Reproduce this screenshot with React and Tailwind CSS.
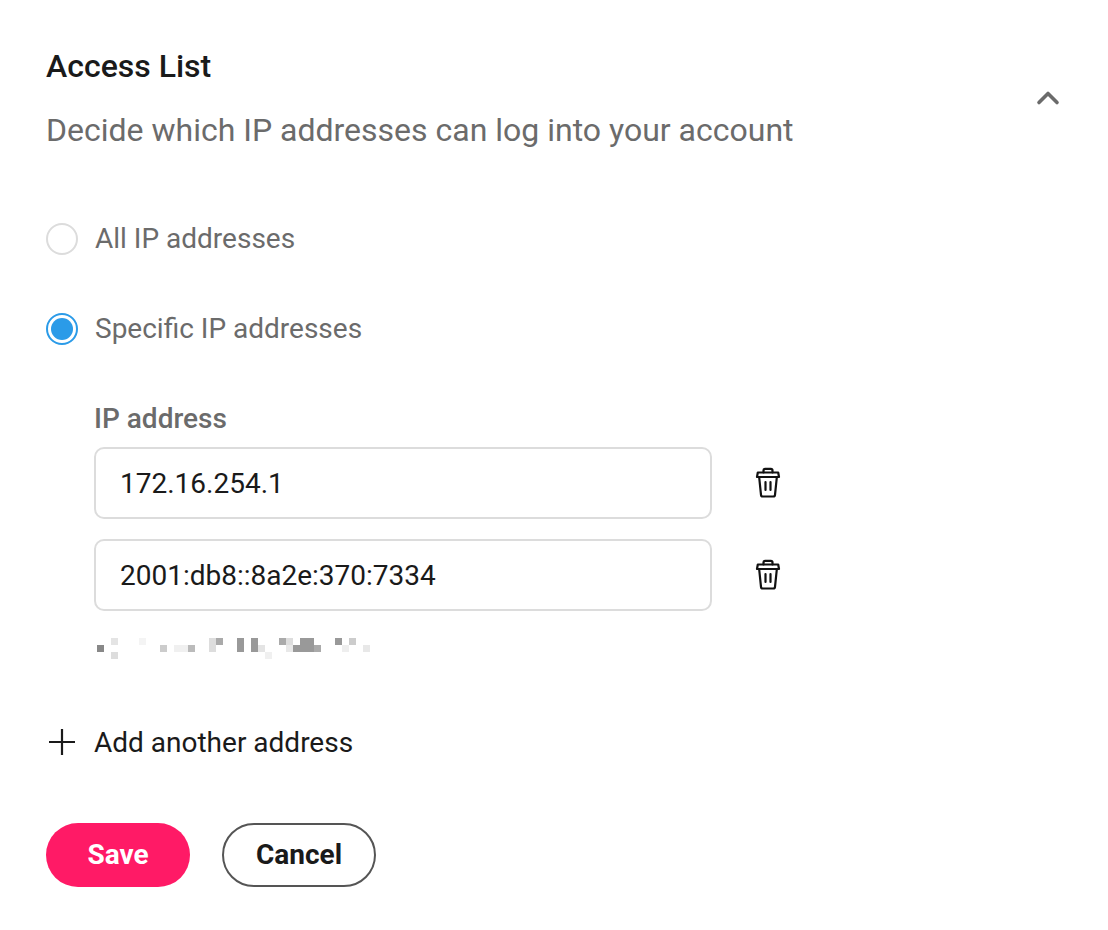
import { ChevronUp } from "lucide-react";

const font = { fontFamily: "Roboto, sans-serif" };

// pixelated redacted line under the inputs: [x, y, w, fill]
const blurCells = [
  [14, 0, 7, "#e4e4e4"], [42, 0, 7, "#f4f4f4"], [112, 0, 7, "#dddddd"], [119, 0, 7, "#aaaaaa"],
  [140, 0, 7, "#999999"], [154, 0, 7, "#999999"], [182, 0, 7, "#aaaaaa"], [189, 0, 7, "#dddddd"],
  [203, 0, 14, "#999999"], [238, 0, 7, "#999999"], [252, 0, 7, "#cccccc"],
  [0, 7, 7, "#888888"], [63, 7, 7, "#cccccc"], [77, 7, 14, "#f0f0f0"], [91, 7, 7, "#bbbbbb"],
  [112, 7, 7, "#dddddd"], [140, 7, 7, "#999999"], [154, 7, 7, "#999999"], [161, 7, 7, "#e4e4e4"],
  [189, 7, 7, "#e8e8e8"], [196, 7, 21, "#999999"], [217, 7, 7, "#aaaaaa"], [245, 7, 7, "#eeeeee"],
  [266, 7, 7, "#e8e8e8"], [14, 14, 7, "#dddddd"], [168, 14, 7, "#f0f0f0"],
];

function Trash() {
  return (
    <svg width="26" height="32" viewBox="0 0 26 32" fill="none" stroke="#111111" strokeWidth="2.2" strokeLinecap="round" strokeLinejoin="round">
      <path d="M2 10h22l-.8-4.500H2.800z" />
      <path d="M8.500 5.500V3.500C8.500 2.400 9.300 1.800 10.200 1.800h5.600c.9 0 1.700.6 1.700 1.700v2" />
      <path d="M4.200 10.500l1.800 17.300c.1 1.100.8 1.700 1.700 1.700h10.600c.9 0 1.600-.6 1.700-1.700l1.800-17.300" />
      <path d="M10.500 15v8M15.500 15v8" />
    </svg>
  );
}

function IpRow({ value }) {
  return (
    <div className="flex items-center">
      <input
        readOnly
        value={value}
        className="w-[618px] h-[72px] px-[24px] border-2 border-[#dcdcdc] rounded-[10px] text-[28px] text-[#1a1a1a] outline-none bg-white"
      />
      <button className="ml-[43px] flex items-center">
        <Trash />
      </button>
    </div>
  );
}

function Radio({ checked, label }) {
  return (
    <label className="flex items-center h-[32px]">
      {checked ? (
        <span className="w-[32px] h-[32px] rounded-full border-2 border-[#2b9be8] flex items-center justify-center">
          <span className="w-[22px] h-[22px] rounded-full bg-[#2b9be8]" />
        </span>
      ) : (
        <span className="w-[32px] h-[32px] rounded-full border-2 border-[#dcdcdc]" />
      )}
      <span className="ml-[17px] text-[28px] text-[#6b6b6b]">{label}</span>
    </label>
  );
}

export default function App() {
  return (
    <main className="w-[1108px] h-[930px] bg-white relative overflow-hidden pl-[46px] pt-[44px]" style={font}>
      <header className="flex items-start justify-between pr-[42px]">
        <div>
          <h1 className="text-[32px] leading-[44px] font-medium text-[#1a1a1a]">Access List</h1>
          <p className="mt-[20px] text-[32px] leading-[44px] text-[#6b6b6b]">Decide which IP addresses can log into your account</p>
        </div>
        <ChevronUp className="mt-[36px] text-[#6b6b6b]" size={36} strokeWidth={2.4} />
      </header>

      <div className="mt-[71px] flex flex-col gap-[58px]">
        <Radio label="All IP addresses" />
        <Radio checked label="Specific IP addresses" />
      </div>

      <div className="mt-[56px] ml-[48px]">
        <label className="block text-[28px] leading-[36px] font-medium text-[#6b6b6b]">IP address</label>
        <div className="mt-[10px] flex flex-col gap-[20px]">
          <IpRow value="172.16.254.1" />
          <IpRow value="2001:db8::8a2e:370:7334" />
        </div>
        <svg className="mt-[27px] block ml-[3px]" width="280" height="21" viewBox="0 0 280 21">
          {blurCells.map(([x, y, w, fill], i) => (
            <rect key={i} x={x} y={y} width={w} height="7" fill={fill} />
          ))}
        </svg>
      </div>

      <button className="mt-[62px] flex items-center text-[28px] leading-[40px] text-[#1a1a1a]">
        <svg width="30" height="30" viewBox="0 0 30 30" fill="none" stroke="#1a1a1a" strokeWidth="2.2" className="ml-[1px]">
          <path d="M15 2v26M2 15h26" />
        </svg>
        <span className="ml-[17px] pt-[2px]">Add another address</span>
      </button>

      <div className="mt-[60px] flex items-center gap-[32px]">
        <button className="w-[144px] h-[64px] rounded-full bg-[#ff1a66] text-white text-[28px] font-bold">Save</button>
        <button className="w-[154px] h-[64px] rounded-full border-2 border-[#555555] text-[#1a1a1a] text-[28px] font-bold">Cancel</button>
      </div>
    </main>
  );
}
